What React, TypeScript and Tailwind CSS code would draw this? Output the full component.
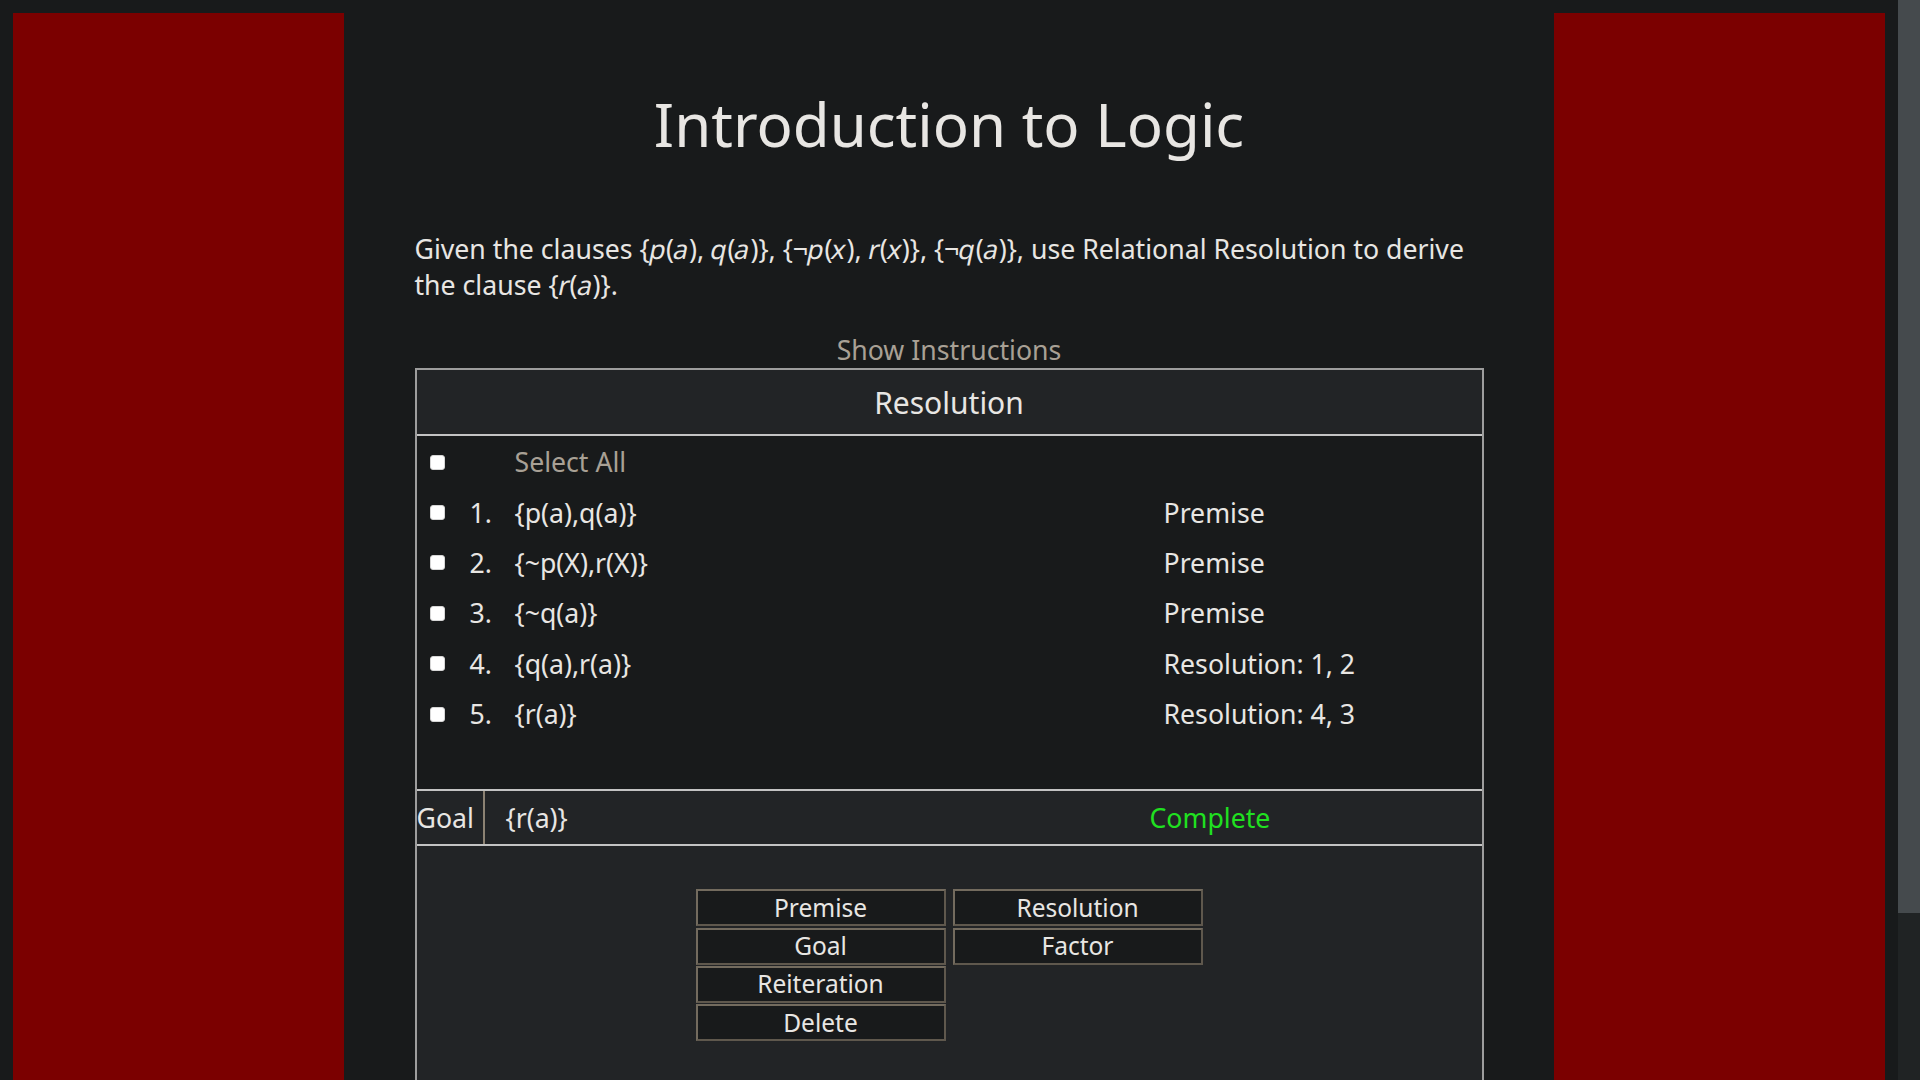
const rows = [
  { n: '1.', f: '{p(a),q(a)}', j: 'Premise' },
  { n: '2.', f: '{~p(X),r(X)}', j: 'Premise' },
  { n: '3.', f: '{~q(a)}', j: 'Premise' },
  { n: '4.', f: '{q(a),r(a)}', j: 'Resolution: 1, 2' },
  { n: '5.', f: '{r(a)}', j: 'Resolution: 4, 3' },
];

function Box() {
  return <div className="h-[15px] w-[15px] rounded-[3px] border border-[#d6d6d6] bg-white" />;
}

// slanted letter, like a synthetic oblique
function M({ c }: { c: string }) {
  return <span className="inline-block -skew-x-12">{c}</span>;
}

function Btn({ label }: { label: string }) {
  return (
    <button className="h-[37px] w-[250px] border-2 border-[#736b5e] border-b-[#5f584d] border-r-[#5f584d] bg-[#181a1b] text-[24.5px] leading-none text-[#e8e6e3]">
      {label}
    </button>
  );
}

export default function App() {
  return (
    <div className="flex h-screen overflow-hidden bg-[#181a1b] font-['Noto_Sans',sans-serif] text-[#e8e6e3]">
      <div className="flex min-w-0 flex-1 px-[13px] pt-[13px]">
        <aside className="w-[331px] shrink-0 bg-[#7b0000]" />

        <main className="min-w-0 flex-1">
          <div className="mx-auto w-[1069px]">
            <h1 className="mt-[68px] text-center text-[60px] leading-[87px]">Introduction to Logic</h1>

            <p className="mt-[63px] text-[26.67px] leading-[36px]">
              Given the clauses {'{'}<M c="p" />(<M c="a" />), <M c="q" />(<M c="a" />){'}'}, {'{'}¬<M c="p" />(<M c="x" />), <M c="r" />(<M c="x" />){'}'}, {'{'}¬<M c="q" />(<M c="a" />){'}'}, use Relational Resolution to derive the clause {'{'}<M c="r" />(<M c="a" />){'}'}.
            </p>

            <div className="mt-[29px] text-center text-[26.67px] leading-[36px] text-[#a8a095]">Show Instructions</div>

            <div className="border-2 border-[#9d9d9d]">
              <div className="flex h-[66px] items-center justify-center border-b-2 border-[#c3c3c3] bg-[#222426] text-[30px]">
                Resolution
              </div>

              <div className="pb-[50px] pt-[1px] text-[26.67px]">
                <div className="grid h-[50.4px] grid-cols-[53px_45px_649px_1fr] items-center">
                  <div className="pl-[13px]"><Box /></div>
                  <div />
                  <div className="text-[#a8a095]">Select All</div>
                  <div />
                </div>
                {rows.map(r => (
                  <div key={r.n} className="grid h-[50.4px] grid-cols-[53px_45px_649px_1fr] items-center">
                    <div className="pl-[13px]"><Box /></div>
                    <div>{r.n}</div>
                    <div>{r.f}</div>
                    <div>{r.j}</div>
                  </div>
                ))}
              </div>

              <div className="grid h-[57px] grid-cols-[68px_665px_1fr] items-stretch border-y-2 border-[#c3c3c3] bg-[#222426] text-[26.67px]">
                <div className="flex items-center border-r-2 border-[#8c8273]">Goal</div>
                <div className="flex items-center pl-[21px]">{'{r(a)}'}</div>
                <div className="flex items-center text-[#20e020]">Complete</div>
              </div>

              <div className="flex h-[260px] justify-center gap-[7px] bg-[#222426] pt-[43px]">
                <div className="flex flex-col gap-[1.33px]">
                  <Btn label="Premise" />
                  <Btn label="Goal" />
                  <Btn label="Reiteration" />
                  <Btn label="Delete" />
                </div>
                <div className="flex flex-col gap-[1.33px]">
                  <Btn label="Resolution" />
                  <Btn label="Factor" />
                </div>
              </div>
            </div>
          </div>
        </main>

        <aside className="w-[331px] shrink-0 bg-[#7b0000]" />
      </div>

      <div className="w-[22px] shrink-0 bg-[#202324]">
        <div className="h-[913px] bg-[#454a4d]" />
      </div>
    </div>
  );
}
